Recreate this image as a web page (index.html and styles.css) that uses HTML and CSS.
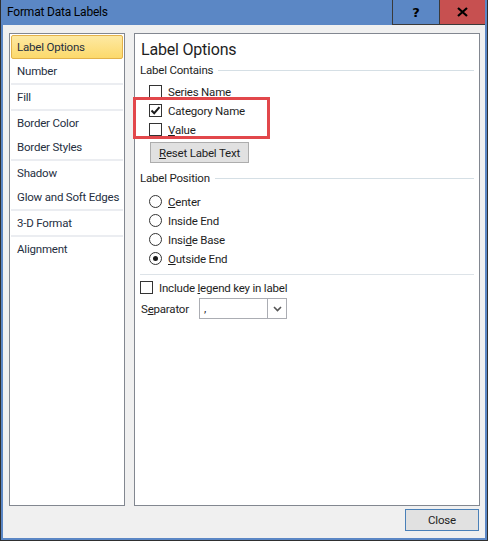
FILE: index.html
```html
<!DOCTYPE html>
<html lang="en">
<head>
    <meta charset="UTF-8">
    <title>Format Data Labels</title>
    <link rel="stylesheet" href="styles.css">
</head>
<body>
    <div class="window">
        <div class="titlebar">
            <span class="title">Format Data Labels</span>
            <div class="title-btn help-btn">?</div>
            <div class="title-btn close-btn">
                <svg width="11" height="10" viewBox="0 0 11 10"><path d="M1 1 L10 9 M10 1 L1 9" stroke="#000" stroke-width="2.2"/></svg>
            </div>
        </div>
        <div class="dialog">
            <div class="panes">
                <ul class="nav-list">
                    <li class="nav-item selected">Label Options</li>
                    <li class="nav-item">Number</li>
                    <li class="nav-sep"></li>
                    <li class="nav-item">Fill</li>
                    <li class="nav-sep"></li>
                    <li class="nav-item">Border Color</li>
                    <li class="nav-item">Border Styles</li>
                    <li class="nav-sep"></li>
                    <li class="nav-item">Shadow</li>
                    <li class="nav-item">Glow and Soft Edges</li>
                    <li class="nav-sep"></li>
                    <li class="nav-item">3-D Format</li>
                    <li class="nav-sep"></li>
                    <li class="nav-item">Alignment</li>
                </ul>

                <div class="options">
                    <h1 class="options-title">Label Options</h1>

                    <div class="group-head"><span>Label Contains</span><div class="group-line"></div></div>
                    <div class="contains">
                        <div class="row indent">
                            <span class="checkbox"></span><span>Series Name</span>
                        </div>
                        <div class="row indent">
                            <span class="checkbox">
                                <svg width="11" height="11" viewBox="0 0 11 11"><path d="M1.5 5.5 L4.2 8.2 L9.5 2.2" fill="none" stroke="#1a1a1a" stroke-width="2"/></svg>
                            </span><span>Category Name</span>
                        </div>
                        <div class="row indent">
                            <span class="checkbox"></span><span><u>V</u>alue</span>
                        </div>
                        <div class="highlight"></div>
                    </div>
                    <button class="btn reset-btn"><u>R</u>eset Label Text</button>

                    <div class="group-head pos-head"><span>Label Position</span><div class="group-line"></div></div>
                    <div class="row indent">
                        <span class="radio"></span><span><u>C</u>enter</span>
                    </div>
                    <div class="row indent">
                        <span class="radio"></span><span>Inside End</span>
                    </div>
                    <div class="row indent">
                        <span class="radio"></span><span>Insi<u>d</u>e Base</span>
                    </div>
                    <div class="row indent">
                        <span class="radio checked"></span><span><u>O</u>utside End</span>
                    </div>

                    <div class="divider"></div>

                    <div class="row">
                        <span class="checkbox"></span><span>Include <u>l</u>egend key in label</span>
                    </div>
                    <div class="row sep-row">
                        <span class="sep-label">S<u>e</u>parator</span>
                        <div class="combo">
                            <span class="combo-value">,</span>
                            <span class="combo-arrow">
                                <svg width="9" height="6" viewBox="0 0 9 6"><path d="M1 1 L4.5 4.5 L8 1" fill="none" stroke="#555" stroke-width="1.6"/></svg>
                            </span>
                        </div>
                    </div>
                </div>
            </div>
            <div class="footer">
                <button class="btn close-dialog">Close</button>
            </div>
        </div>
    </div>
</body>
</html>
```

FILE: styles.css
```css
* {
    box-sizing: border-box;
}

body {
    margin: 0;
    font-family: Roboto, "Noto Sans", sans-serif;
    font-size: 11.5px;
    letter-spacing: -0.2px;
    color: #1e1e1e;
}

.window {
    width: 488px;
    height: 541px;
    display: flex;
    flex-direction: column;
    background-color: #5b87c5;
    border: 1px solid #2f2f2f;
    border-top: none;
    padding: 0 2px 2px 2px;
}

.titlebar {
    height: 25px;
    display: flex;
    align-items: stretch;
}

.title {
    flex: 1;
    padding-left: 4px;
    line-height: 25px;
    font-size: 12px;
    color: #000;
}

.title-btn {
    display: flex;
    justify-content: center;
    align-items: center;
    border-bottom: 1px solid #3a3a3a;
    border-left: 1px solid #3a3a3a;
    font-weight: bold;
    font-size: 13px;
    color: #000;
}

.help-btn {
    width: 47px;
    font-family: "DejaVu Sans", sans-serif;
}

.close-btn {
    width: 46px;
    background-color: #c75050;
}

.dialog {
    flex: 1;
    display: flex;
    flex-direction: column;
    background-color: #f0f0f0;
    padding: 8px 5px 7px 6px;
}

.panes {
    display: flex;
    gap: 9px;
    height: 473px;
}

.nav-list {
    list-style: none;
    margin: 0;
    padding: 1px;
    width: 116px;
    background-color: #fff;
    border: 1px solid #828790;
    color: #262f3f;
}

.nav-item {
    height: 24px;
    line-height: 24px;
    padding-left: 6px;
    white-space: nowrap;
}

.nav-item.selected {
    background: linear-gradient(#fde9a3, #fcd96c);
    border: 1px solid #e3b24a;
    border-radius: 2px;
    line-height: 22px;
    padding-left: 5px;
}

.nav-sep {
    height: 2px;
    background-color: #ebedf1;
}

.options {
    flex: 1;
    background-color: #fff;
    border: 1px solid #828790;
    padding: 5px 5px 0 5px;
}

.options-title {
    margin: 0 0 1px 1px;
    font-size: 16px;
    font-weight: normal;
    line-height: 22px;
}

.group-head {
    display: flex;
    align-items: center;
    height: 16px;
}

.group-line {
    flex: 1;
    height: 1px;
    margin: 0 0 0 5px;
    background-color: #d5dfe5;
}

.contains {
    position: relative;
    margin-top: 4px;
}

.row {
    display: flex;
    align-items: center;
    gap: 6px;
    height: 19px;
}

.indent {
    padding-left: 9px;
}

.checkbox {
    width: 13px;
    height: 13px;
    border: 1px solid #333;
    background-color: #fff;
    display: flex;
    justify-content: center;
    align-items: center;
}

.radio {
    width: 13px;
    height: 13px;
    border: 1px solid #333;
    border-radius: 50%;
    background-color: #fff;
    display: flex;
    justify-content: center;
    align-items: center;
}

.radio.checked::after {
    content: "";
    width: 5px;
    height: 5px;
    border-radius: 50%;
    background-color: #1a1a1a;
}

.highlight {
    position: absolute;
    left: -7px;
    top: 15px;
    width: 137px;
    height: 42px;
    border: 3px solid #e2474b;
}

.btn {
    font-family: inherit;
    font-size: 11.5px;
    letter-spacing: -0.2px;
    color: #1e1e1e;
    background-color: #e1e1e1;
    border: 1px solid #adadad;
    padding: 0;
}

.reset-btn {
    display: block;
    margin: 3px 0 0 10px;
    width: 99px;
    height: 21px;
}

.pos-head {
    margin-top: 7px;
    margin-bottom: 6px;
}

.divider {
    height: 1px;
    margin: 6px 0 3px 0;
    background-color: #dde3e8;
}

.sep-row {
    height: 21px;
    margin-top: 1px;
    gap: 0;
    padding-left: 1px;
}

.sep-label {
    width: 58px;
}

.combo {
    display: flex;
    width: 88px;
    height: 21px;
    border: 1px solid #abadb3;
    background-color: #fff;
}

.combo-value {
    flex: 1;
    padding-left: 4px;
    line-height: 18px;
}

.combo-arrow {
    width: 19px;
    border-left: 1px solid #abadb3;
    display: flex;
    justify-content: center;
    align-items: center;
}

.footer {
    display: flex;
    justify-content: flex-end;
    margin-top: 3px;
    padding-right: 1px;
}

.close-dialog {
    width: 74px;
    height: 22px;
    border-color: #4a80b8;
}
```
